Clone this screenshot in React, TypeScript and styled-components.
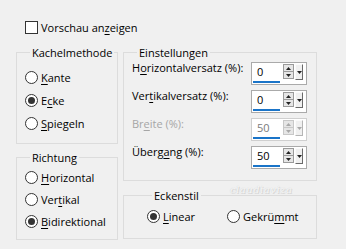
import React from "react";
import styled, { createGlobalStyle } from "styled-components";

const GlobalStyle = createGlobalStyle`
  html, body { margin: 0; padding: 0; background: #f0f0f0; }
  body {
    font-family: "Open Sans", "Noto Sans", sans-serif;
    font-size: 11px;
    color: #000;
  }
`;

const Page = styled.div`
  position: relative;
  width: 346px;
  height: 249px;
  box-sizing: border-box;
  padding-top: 21px;
  background: #f0f0f0;
  overflow: hidden;
`;

const CheckRow = styled.label`
  display: flex;
  align-items: center;
  gap: 3px;
  margin-left: 25px;
  height: 13px;
  line-height: 15px;
`;

const CheckBox = styled.span`
  width: 13px;
  height: 13px;
  box-sizing: border-box;
  border: 1px solid #333;
  background: #fff;
`;

const Columns = styled.div`
  display: grid;
  grid-template-columns: 102px 194px;
  column-gap: 5px;
  margin: 12px 0 0 16px;
  align-items: start;
`;

const Column = styled.div<{ $gap: number }>`
  display: flex;
  flex-direction: column;
  gap: ${(p) => p.$gap}px;
`;

const Group = styled.fieldset<{ $h: number; $pt: number; $pl?: number }>`
  margin: 0;
  min-width: 0;
  height: ${(p) => p.$h}px;
  box-sizing: border-box;
  border: 1px solid #dcdcdc;
  padding: ${(p) => p.$pt}px 8px 0 ${(p) => p.$pl ?? 8}px;
`;

const Legend = styled.legend`
  margin-left: 5px;
  padding: 0 2px;
  line-height: 13px;
  font-size: 11px;
`;

const RadioRow = styled.div<{ $h: number }>`
  display: flex;
  align-items: center;
  gap: 3px;
  height: ${(p) => p.$h}px;
  line-height: 15px;
`;

const RadioCircle = styled.span<{ $on?: boolean }>`
  position: relative;
  width: 13px;
  height: 13px;
  box-sizing: border-box;
  border: 1px solid #333;
  border-radius: 50%;
  background: #fff;
  flex: none;
  &::after {
    content: "";
    display: ${(p) => (p.$on ? "block" : "none")};
    position: absolute;
    left: 2px;
    top: 2px;
    width: 7px;
    height: 7px;
    border-radius: 50%;
    background: #333;
  }
`;

const Key = styled.span`
  text-decoration: underline;
  text-underline-offset: 2px;
  text-decoration-thickness: 1px;
`;

const SettingRow = styled.div`
  display: grid;
  grid-template-columns: 119px 56px;
  height: 28px;
  align-items: start;
`;

const SettingLabel = styled.span<{ $disabled?: boolean }>`
  line-height: 11px;
  padding-top: 0;
  white-space: nowrap;
  color: ${(p) => (p.$disabled ? "#a6a6a6" : "#000")};
`;

const SpinBox = styled.div<{ $disabled?: boolean }>`
  display: flex;
  align-items: flex-start;
  width: 56px;
  height: 23px;
  box-sizing: border-box;
  border: 1px solid ${(p) => (p.$disabled ? "#cfcfcf" : "#aaaaaa")};
  background: #fff;
  padding: 1px;
`;

const SpinValue = styled.div<{ $disabled?: boolean }>`
  width: 27px;
  height: 19px;
  box-sizing: border-box;
  padding-left: 4px;
  line-height: 15px;
  border-bottom: 2px solid #1a74c8;
  color: ${(p) => (p.$disabled ? "#7a7a7a" : "#000")};
`;

const Spinner = styled.div`
  display: flex;
  flex-direction: column;
  margin-left: 3px;
  width: 11px;
`;

const SpinHalf = styled.div<{ $disabled?: boolean }>`
  height: 8px;
  box-sizing: border-box;
  border: 1px solid ${(p) => (p.$disabled ? "#c8c8c8" : "#9a9a9a")};
  background: #e6e6e6;
  display: flex;
  align-items: center;
  justify-content: center;
  & + & { margin-top: -1px; }
`;

const DropButton = styled.div<{ $disabled?: boolean }>`
  margin-left: 1px;
  width: 8px;
  height: 16px;
  box-sizing: border-box;
  border-top: 1px solid #fafafa;
  border-left: 1px solid #fafafa;
  border-right: 1px solid ${(p) => (p.$disabled ? "#b5b5b5" : "#6a6a6a")};
  border-bottom: 1px solid ${(p) => (p.$disabled ? "#b5b5b5" : "#6a6a6a")};
  background: #f0f0f0;
  display: flex;
  align-items: center;
  justify-content: center;
`;

const SettingsBody = styled.div`
  display: flex;
  flex-direction: column;
`;

const StyleRow = styled.div`
  display: grid;
  grid-template-columns: 80px auto;
`;

const Watermark = styled.div`
  position: absolute;
  left: 230px;
  top: 184px;
  font-family: "DejaVu Serif", serif;
  font-style: italic;
  font-size: 10px;
  letter-spacing: 0.5px;
  color: #f8f8f8;
  text-shadow: 0 0 1px #c4c4c4, 1px 1px 0 #d8d8d8;
  pointer-events: none;
`;

const Tri = ({ up, color }: { up?: boolean; color: string }) => (
  <svg width="5" height="3" viewBox="0 0 5 3">
    <polygon points={up ? "2.5,0 5,3 0,3" : "0,0 5,0 2.5,3"} fill={color} />
  </svg>
);

const Spin = ({ value, disabled }: { value: string; disabled?: boolean }) => {
  const c = disabled ? "#a8a8a8" : "#222";
  return (
    <SpinBox $disabled={disabled}>
      <SpinValue $disabled={disabled}>{value}</SpinValue>
      <Spinner>
        <SpinHalf $disabled={disabled}>
          <Tri up color={c} />
        </SpinHalf>
        <SpinHalf $disabled={disabled}>
          <Tri color={c} />
        </SpinHalf>
      </Spinner>
      <DropButton $disabled={disabled}>
        <Tri color={c} />
      </DropButton>
    </SpinBox>
  );
};

const Radio = ({
  on,
  h,
  children,
}: {
  on?: boolean;
  h: number;
  children: React.ReactNode;
}) => (
  <RadioRow $h={h}>
    <RadioCircle $on={on} />
    <span>{children}</span>
  </RadioRow>
);

export default function App() {
  return (
    <Page>
      <GlobalStyle />
      <CheckRow>
        <CheckBox />
        <span>
          Vorschau an<Key>z</Key>eigen
        </span>
      </CheckRow>
      <Columns>
        <Column $gap={7}>
          <Group $h={98} $pt={7}>
            <Legend>Kachelmethode</Legend>
            <Radio h={23}>
              <Key>K</Key>ante
            </Radio>
            <Radio h={23} on>
              E<Key>c</Key>ke
            </Radio>
            <Radio h={23}>
              <Key>S</Key>piegeln
            </Radio>
          </Group>
          <Group $h={89} $pt={2}>
            <Legend>Richtung</Legend>
            <Radio h={22}>
              <Key>H</Key>orizontal
            </Radio>
            <Radio h={22}>
              Ver<Key>t</Key>ikal
            </Radio>
            <Radio h={22} on>
              <Key>B</Key>idirektional
            </Radio>
          </Group>
        </Column>
        <Column $gap={8}>
          <Group $h={135} $pt={3}>
            <Legend>Einstellungen</Legend>
            <SettingsBody>
              <SettingRow>
                <SettingLabel>
                  H<Key>o</Key>rizontalversatz (%):
                </SettingLabel>
                <Spin value="0" />
              </SettingRow>
              <SettingRow>
                <SettingLabel>
                  Ver<Key>t</Key>ikalversatz (%):
                </SettingLabel>
                <Spin value="0" />
              </SettingRow>
              <SettingRow>
                <SettingLabel $disabled>
                  Br<Key>e</Key>ite (%):
                </SettingLabel>
                <Spin value="50" disabled />
              </SettingRow>
              <SettingRow>
                <SettingLabel>
                  Überg<Key>a</Key>ng (%):
                </SettingLabel>
                <Spin value="50" />
              </SettingRow>
            </SettingsBody>
          </Group>
          <Group $h={50} $pt={3} $pl={23}>
            <Legend>Eckenstil</Legend>
            <StyleRow>
              <Radio h={23} on>
                <Key>L</Key>inear
              </Radio>
              <Radio h={23}>
                Gekrü<Key>m</Key>mt
              </Radio>
            </StyleRow>
          </Group>
        </Column>
      </Columns>
      <Watermark>claudiaviza</Watermark>
    </Page>
  );
}
